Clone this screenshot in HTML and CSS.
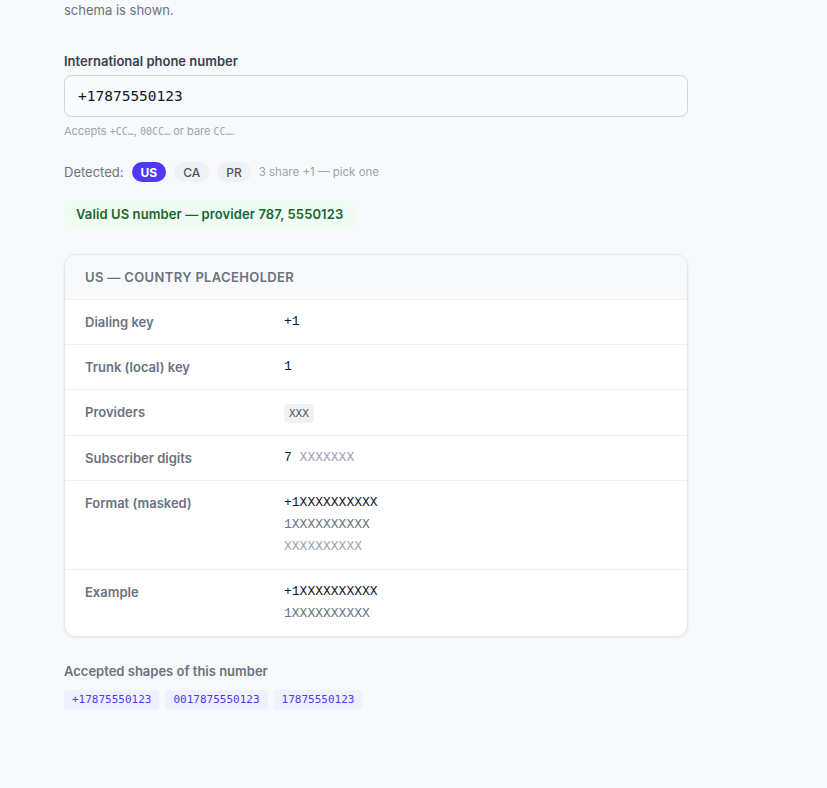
FILE: index.html
```html
<!DOCTYPE html>
<html lang="en">
<head>
<meta charset="utf-8">
<title>Phone number schema</title>
<link rel="stylesheet" href="styles.css">
</head>
<body>
<main class="page">
  <p class="intro">schema is shown.</p>

  <section class="field">
    <label class="field-label" for="phone">International phone number</label>
    <input id="phone" class="field-input" type="text" value="+17875550123">
    <p class="field-hint">Accepts <code>+CC…</code>, <code>00CC…</code> or bare <code>CC…</code>.</p>
  </section>

  <div class="detected">
    <span class="detected-label">Detected:</span>
    <span class="pill pill-active">US</span>
    <span class="pill">CA</span>
    <span class="pill">PR</span>
    <span class="detected-note">3 share +1 — pick one</span>
  </div>

  <div class="status">Valid US number — provider 787, 5550123</div>

  <section class="card">
    <header class="card-head">US — Country placeholder</header>
    <div class="row">
      <div class="row-key">Dialing key</div>
      <div class="row-val mono">+1</div>
    </div>
    <div class="row">
      <div class="row-key">Trunk (local) key</div>
      <div class="row-val mono">1</div>
    </div>
    <div class="row">
      <div class="row-key">Providers</div>
      <div class="row-val"><span class="tag">XXX</span></div>
    </div>
    <div class="row">
      <div class="row-key">Subscriber digits</div>
      <div class="row-val mono">7 <span class="faint">XXXXXXX</span></div>
    </div>
    <div class="row">
      <div class="row-key">Format (masked)</div>
      <div class="row-val mono stack">
        <span>+1XXXXXXXXXX</span>
        <span class="muted">1XXXXXXXXXX</span>
        <span class="faint">XXXXXXXXXX</span>
      </div>
    </div>
    <div class="row">
      <div class="row-key">Example</div>
      <div class="row-val mono stack">
        <span>+1XXXXXXXXXX</span>
        <span class="muted">1XXXXXXXXXX</span>
      </div>
    </div>
  </section>

  <section class="shapes">
    <h3 class="shapes-title">Accepted shapes of this number</h3>
    <div class="shape-list">
      <span class="shape">+17875550123</span>
      <span class="shape">0017875550123</span>
      <span class="shape">17875550123</span>
    </div>
  </section>
</main>
</body>
</html>
```

FILE: styles.css
```css
html, body {
  margin: 0;
  padding: 0;
  background: #f8f9fb;
}
body {
  font-family: "Inter", "Noto Sans", sans-serif;
  color: #374151;
}
.page {
  width: 624px;
  padding: 0 0 60px 64px;
}
.intro {
  margin: 0;
  font-size: 13px;
  line-height: 20px;
  color: #6b7280;
}
.field {
  margin-top: 32px;
  display: flex;
  flex-direction: column;
}
.field-label {
  font-size: 13px;
  font-weight: 600;
  line-height: 18px;
  color: #374151;
  margin-bottom: 5px;
}
.field-input {
  box-sizing: border-box;
  width: 624px;
  height: 42px;
  padding: 0 13px;
  border: 1px solid #d1d5db;
  border-radius: 8px;
  background: #f9fafb;
  font-family: "DejaVu Sans Mono", monospace;
  font-size: 14.5px;
  color: #111827;
  outline: none;
}
.field-hint {
  margin: 6px 0 0;
  font-size: 11px;
  line-height: 16px;
  color: #9ca3af;
}
.field-hint code {
  font-family: "DejaVu Sans Mono", monospace;
  font-size: 10px;
}
.detected {
  margin-top: 21px;
  display: flex;
  align-items: center;
  gap: 8px;
  height: 22px;
}
.detected-label {
  font-size: 13px;
  color: #6b7280;
}
.pill {
  display: inline-flex;
  align-items: center;
  height: 20px;
  padding: 0 9px;
  border-radius: 999px;
  background: #f0f1f3;
  font-size: 12px;
  font-weight: 500;
  color: #4b5563;
}
.pill-active {
  background: #4f39f6;
  color: #ffffff;
  font-weight: 700;
}
.detected-note {
  font-size: 11.5px;
  color: #9ca3af;
}
.status {
  display: inline-block;
  margin-top: 17px;
  padding: 0 12px;
  height: 28px;
  line-height: 28px;
  border-radius: 8px;
  background: #effcf3;
  color: #166534;
  font-size: 13px;
  font-weight: 600;
  letter-spacing: 0.1px;
}
.card {
  margin-top: 26px;
  background: #ffffff;
  border: 1px solid #e5e7eb;
  border-radius: 12px;
  box-shadow: 0 1px 3px rgba(17, 24, 39, 0.08);
  overflow: hidden;
}
.card-head {
  padding: 12px 20px;
  line-height: 20px;
  background: #f8f9fb;
  font-size: 13px;
  font-weight: 600;
  letter-spacing: 0.35px;
  text-transform: uppercase;
  color: #6b7280;
}
.row {
  display: grid;
  grid-template-columns: 199px 1fr;
  padding: 12px 20px;
  border-top: 1px solid #eef0f2;
  line-height: 20px;
}
.row-key {
  font-size: 13px;
  font-weight: 600;
  color: #6b7280;
}
.row-val {
  font-size: 13px;
  color: #111827;
}
.mono {
  font-family: "Liberation Mono", monospace;
}
.stack {
  display: flex;
  flex-direction: column;
  gap: 2px;
}
.muted {
  color: #6b7280;
}
.faint {
  color: #9ca3af;
}
.tag {
  display: inline-block;
  padding: 0 5px;
  height: 19px;
  line-height: 19px;
  border-radius: 4px;
  background: #f0f1f3;
  font-family: "DejaVu Sans Mono", monospace;
  font-size: 11px;
  color: #4b5563;
}
.shapes {
  margin-top: 25px;
}
.shapes-title {
  margin: 0 0 10px;
  font-size: 13px;
  font-weight: 600;
  line-height: 18px;
  color: #6b7280;
}
.shape-list {
  display: flex;
  gap: 6px;
}
.shape {
  display: inline-block;
  height: 20px;
  line-height: 20px;
  padding: 0 8px;
  border-radius: 4px;
  background: #eef1ff;
  font-family: "DejaVu Sans Mono", monospace;
  font-size: 11px;
  color: #4f39f6;
}
```
